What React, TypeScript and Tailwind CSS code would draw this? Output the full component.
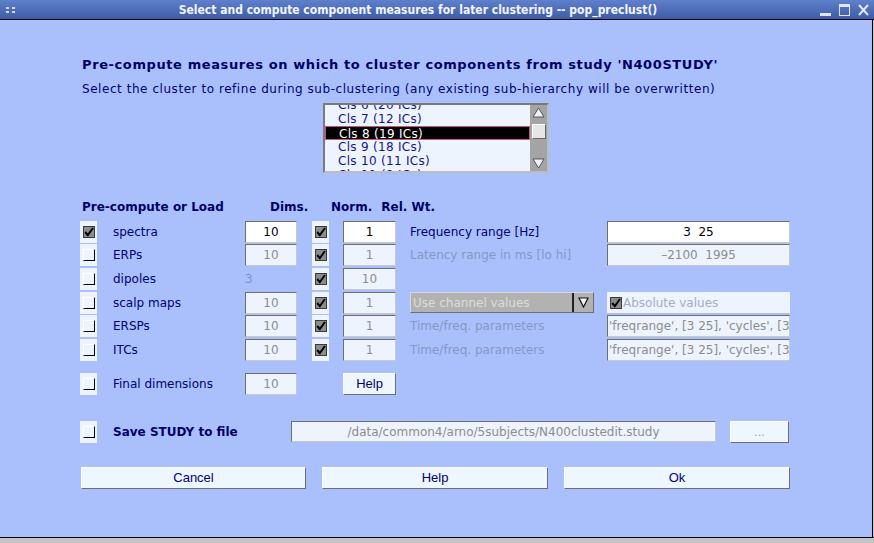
import type { ReactNode } from "react";

/* ————— pièces de base ————— */

function Coche({ on, cellule = true }: { on: boolean; cellule?: boolean }) {
  const boite = on ? (
    <span className="flex h-[12px] w-[12px] items-center justify-center border border-[#3a3a3a] bg-[#8c8c8c]">
      <svg width="10" height="10" viewBox="0 0 10 10" aria-hidden="true">
        <path d="M1.2 5 L3.8 8.2 L9 1" fill="none" stroke="#000" strokeWidth="2" />
      </svg>
    </span>
  ) : (
    <span className="h-[12px] w-[12px] border-t border-l border-t-[#ffffff] border-l-[#ffffff] border-r border-b border-r-black border-b-black" />
  );
  if (!cellule) return boite;
  return (
    <span className="flex h-[22px] w-[17px] shrink-0 items-center justify-center bg-[#eef4fe]">
      {boite}
    </span>
  );
}

function Champ({
  valeur,
  actif = false,
  largeur,
  gauche = false,
}: {
  valeur: string;
  actif?: boolean;
  largeur: string;
  gauche?: boolean;
}) {
  return (
    <div
      className={`flex h-[22px] shrink-0 items-center overflow-hidden border border-t-[#6e6e6e] border-l-[#6e6e6e] border-r-[#c8c8c8] border-b-[#c8c8c8] text-[12px] whitespace-pre ${largeur} ${
        actif ? "bg-white text-black" : "bg-[#eef4fe] text-[#8c8c8c]"
      } ${gauche ? "justify-start pl-[1px]" : "justify-center"}`}
    >
      {valeur}
    </div>
  );
}

function Bouton({ children, largeur, pale = false }: { children: ReactNode; largeur: string; pale?: boolean }) {
  return (
    <button
      className={`flex h-[22px] shrink-0 items-center justify-center border border-t-white border-l-white border-r-[#6e6e6e] border-b-[#6e6e6e] bg-[#eef6ff] font-['Liberation_Sans',sans-serif] text-[13px] ${largeur} ${
        pale ? "text-[#a0a8b8]" : "text-[#000070]"
      }`}
    >
      {children}
    </button>
  );
}

/* ————— barre de titre ————— */

function BarreTitre() {
  return (
    <div className="relative flex h-[19px] shrink-0 items-center justify-center bg-gradient-to-b from-[#5f80cc] to-[#3e5ca6] pr-[38px]">
      <div className="absolute top-[7px] left-[6px] grid grid-cols-2 gap-x-[3px] gap-y-[2px]">
        <span className="h-[2px] w-[3px] bg-[#d0daf2]" />
        <span className="h-[2px] w-[3px] bg-[#d0daf2]" />
        <span className="h-[2px] w-[3px] bg-[#d0daf2]" />
        <span className="h-[2px] w-[3px] bg-[#d0daf2]" />
      </div>
      <span className="font-['DejaVu_Sans_Condensed','DejaVu_Sans',sans-serif] text-[12px] font-bold text-[#f2f5ff]">
        Select and compute component measures for later clustering -- pop_preclust()
      </span>
      <div className="absolute top-[4px] right-[5px] flex items-end gap-[8px]">
        <span className="h-[3px] w-[11px] bg-[#dfe6f7]" />
        <span className="h-[12px] w-[11px] border border-t-[3px] border-[#dfe6f7]" />
        <svg width="11" height="12" viewBox="0 0 11 12" aria-hidden="true">
          <path d="M1 1 L10 11 M10 1 L1 11" stroke="#dfe6f7" strokeWidth="2" />
        </svg>
      </div>
    </div>
  );
}

/* ————— liste des clusters ————— */

const CLUSTERS = [
  "Cls 6 (20 ICs)",
  "Cls 7 (12 ICs)",
  "Cls 8 (19 ICs)",
  "Cls 9 (18 ICs)",
  "Cls 10 (11 ICs)",
  "Cls 11 (9 ICs)",
];

function ListeClusters() {
  return (
    <div className="ml-[243px] flex h-[70px] w-[226px] border-2 border-t-[#7a7a7a] border-l-[#7a7a7a] border-r-[#bcbcbc] border-b-[#bcbcbc] bg-[#eef4fe]">
      <div className="flex-1 overflow-hidden">
        <div className="-mt-[7px]">
          {CLUSTERS.map((nom) => (
            <div
              key={nom}
              className={`h-[14px] pl-[13px] text-[12px] leading-[14px] tracking-[0.3px] ${
                nom === "Cls 8 (19 ICs)"
                  ? "border border-[#c8507e] bg-black pl-[12px] leading-[12px] text-white"
                  : "text-[#14148c]"
              }`}
            >
              {nom}
            </div>
          ))}
        </div>
      </div>
      <div className="flex w-[17px] flex-col items-center justify-between bg-[#a4a4a4] py-[2px]">
        <svg width="13" height="11" viewBox="0 0 13 11" aria-hidden="true">
          <path d="M6.5 1 L12 10 L1 10 Z" fill="#eef4fe" stroke="#555" strokeWidth="1" />
        </svg>
        <span className="mt-[6px] h-[15px] w-[14px] border border-t-white border-l-white border-r-[#666] border-b-[#666] bg-[#e6e6e6]" />
        <svg className="mt-auto" width="13" height="11" viewBox="0 0 13 11" aria-hidden="true">
          <path d="M1 1 L12 1 L6.5 10 Z" fill="#eef4fe" stroke="#555" strokeWidth="1" />
        </svg>
      </div>
    </div>
  );
}

/* ————— lignes de mesures ————— */

const PARAMS = "'freqrange', [3 25], 'cycles', [3 0.5], 'alpha', 0.01";

type Mesure = {
  nom: string;
  actif: boolean;
  dims: string | null;
  poids: string;
  droite: ReactNode;
};

const MESURES: Mesure[] = [
  {
    nom: "spectra",
    actif: true,
    dims: "10",
    poids: "1",
    droite: (
      <>
        <span className="w-[197px] shrink-0 text-[12px] text-[#000070]">Frequency range [Hz]</span>
        <Champ valeur="3  25" actif largeur="w-[183px]" />
      </>
    ),
  },
  {
    nom: "ERPs",
    actif: false,
    dims: "10",
    poids: "1",
    droite: (
      <>
        <span className="w-[197px] shrink-0 text-[12px] text-[#8797c6]">Latency range in ms [lo hi]</span>
        <Champ valeur="–2100  1995" largeur="w-[183px]" />
      </>
    ),
  },
  { nom: "dipoles", actif: false, dims: null, poids: "10", droite: null },
  {
    nom: "scalp maps",
    actif: false,
    dims: "10",
    poids: "1",
    droite: (
      <>
        <div className="flex h-[21px] w-[184px] shrink-0 items-center border border-t-[#d8d8d8] border-l-[#d8d8d8] border-r-[#6e6e6e] border-b-[#6e6e6e] bg-[#b2b2b2]">
          <span className="flex-1 pl-[2px] text-[12px] text-[#dcdcdc]">Use channel values</span>
          <span className="h-full w-[2px] bg-[#222]" />
          <svg className="mx-[4px]" width="11" height="11" viewBox="0 0 11 11" aria-hidden="true">
            <path d="M1 1 L10 1 L5.5 10 Z" fill="#f4f4f4" stroke="#111" strokeWidth="1.2" />
          </svg>
        </div>
        <span className="w-[13px] shrink-0" />
        <div className="flex h-[21px] w-[183px] shrink-0 items-center gap-[1px] bg-[#eef4fe] pl-[3px]">
          <Coche on cellule={false} />
          <span className="text-[12px] text-[#a6aec0]">Absolute values</span>
        </div>
      </>
    ),
  },
  {
    nom: "ERSPs",
    actif: false,
    dims: "10",
    poids: "1",
    droite: (
      <>
        <span className="w-[197px] shrink-0 text-[12px] text-[#8797c6]">Time/freq. parameters</span>
        <Champ valeur={PARAMS} gauche largeur="w-[183px]" />
      </>
    ),
  },
  {
    nom: "ITCs",
    actif: false,
    dims: "10",
    poids: "1",
    droite: (
      <>
        <span className="w-[197px] shrink-0 text-[12px] text-[#8797c6]">Time/freq. parameters</span>
        <Champ valeur={PARAMS} gauche largeur="w-[183px]" />
      </>
    ),
  },
];

function LigneMesure({ m }: { m: Mesure }) {
  return (
    <div className="flex h-[23.6px] items-center">
      <Coche on={m.actif} />
      <span className="ml-[16px] w-[132px] shrink-0 text-[12px] text-[#000070]">{m.nom}</span>
      {m.dims ? (
        <Champ valeur={m.dims} actif={m.actif} largeur="w-[52px]" />
      ) : (
        <span className="w-[52px] shrink-0 text-[12px] text-[#7f90c4]">3</span>
      )}
      <span className="ml-[15px]">
        <Coche on />
      </span>
      <span className="ml-[14px]">
        <Champ valeur={m.poids} actif={m.actif} largeur="w-[53px]" />
      </span>
      <div className="ml-[14px] flex items-center">{m.droite}</div>
    </div>
  );
}

/* ————— page ————— */

export default function App() {
  return (
    <div className="flex h-[543px] w-[874px] flex-col overflow-hidden bg-[#aac0fd] font-['DejaVu_Sans',sans-serif]">
      <BarreTitre />
      <div className="h-px shrink-0 bg-black" />
      <div className="flex min-h-0 flex-1">
        <main className="flex-1 pl-[80px]">
          <h1 className="mt-[37px] pl-[2px] text-[13px] leading-[16px] font-bold tracking-[0.6px] text-[#000066]">
            Pre-compute measures on which to cluster components from study 'N400STUDY'
          </h1>
          <p className="mt-[9px] pl-[2px] text-[12px] leading-[14px] tracking-[0.55px] text-[#000070]">
            Select the cluster to refine during sub-clustering (any existing sub-hierarchy will be overwritten)
          </p>
          <div className="mt-[7px]">
            <ListeClusters />
          </div>

          <div className="mt-[27px] flex h-[14px] items-center text-[12px] font-bold text-[#000066]">
            <span className="w-[190px] pl-[2px]">Pre-compute or Load</span>
            <span className="w-[61px]">Dims.</span>
            <span>Norm.</span>
            <span className="ml-[9px]">Rel. Wt.</span>
          </div>

          <div className="mt-[6px]">
            {MESURES.map((m) => (
              <LigneMesure key={m.nom} m={m} />
            ))}
          </div>

          <div className="mt-[10.5px] flex h-[23.6px] items-center">
            <Coche on={false} />
            <span className="ml-[16px] w-[132px] shrink-0 text-[12px] text-[#000070]">Final dimensions</span>
            <Champ valeur="10" largeur="w-[52px]" />
            <span className="ml-[46px]">
              <Bouton largeur="w-[53px]">Help</Bouton>
            </span>
          </div>

          <div className="mt-[24.4px] flex h-[23.6px] items-center">
            <Coche on={false} />
            <span className="ml-[16px] w-[178px] shrink-0 text-[12px] font-bold text-[#000066]">Save STUDY to file</span>
            <div className="flex h-[21px] w-[425px] shrink-0 items-center justify-center border border-t-[#6e6e6e] border-l-[#6e6e6e] border-r-[#c8c8c8] border-b-[#c8c8c8] bg-[#eef4fe] text-[12px] text-[#8c8c8c]">
              /data/common4/arno/5subjects/N400clustedit.study
            </div>
            <span className="ml-[14px]">
              <Bouton largeur="w-[59px]" pale>
                ...
              </Bouton>
            </span>
          </div>

          <div className="mt-[23px] ml-[1px] flex gap-4">
            <Bouton largeur="w-[225px]">Cancel</Bouton>
            <Bouton largeur="w-[226px]">Help</Bouton>
            <Bouton largeur="w-[226px]">Ok</Bouton>
          </div>
        </main>
        <div className="w-px bg-black" />
        <div className="w-px bg-[#c8c8c8]" />
      </div>
      <div className="h-px shrink-0 bg-black" />
      <div className="h-[5px] shrink-0 bg-[#c4c4c4]" />
    </div>
  );
}
